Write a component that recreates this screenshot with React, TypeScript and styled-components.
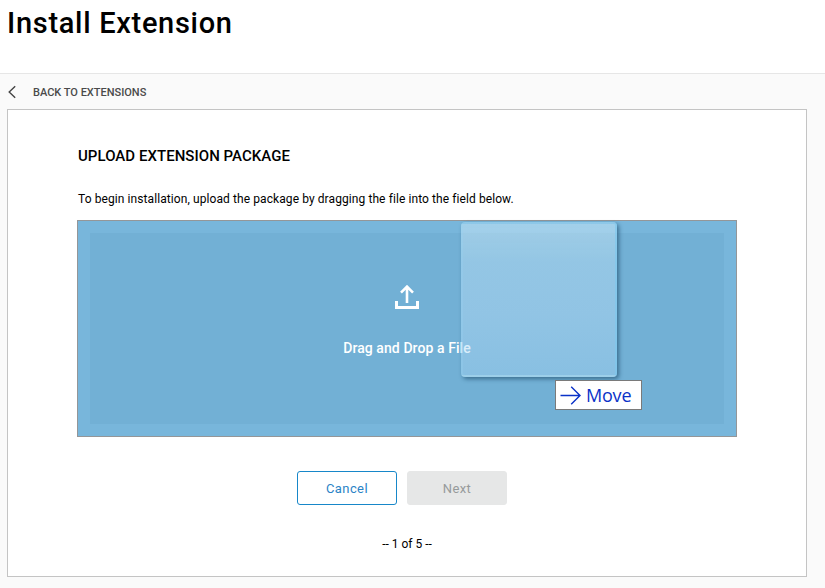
import React from "react";
import styled, { createGlobalStyle } from "styled-components";

const GlobalStyle = createGlobalStyle`
  * { box-sizing: border-box; }
  body {
    margin: 0;
    background: #fafafa;
    color: #000;
    font-family: Roboto, "Liberation Sans", sans-serif;
    overflow: hidden;
  }
`;

const Page = styled.div`
  height: 588px;
  display: flex;
  flex-direction: column;
`;

const Header = styled.header`
  height: 74px;
  flex: none;
  padding: 5px 7px 0;
  background: #fff;
  border-bottom: 1px solid #e6e6e6;
`;

const Title = styled.h1`
  margin: 0;
  font-size: 29px;
  line-height: 36px;
  font-weight: 500;
  letter-spacing: 0.7px;
`;

const BackLink = styled.a`
  height: 35px;
  flex: none;
  display: flex;
  align-items: center;
  gap: 16px;
  padding: 1px 0 0 8px;
  color: #4a4a4a;
  font-size: 11px;
  font-weight: 500;
`;

const Card = styled.main`
  width: 800px;
  height: 468px;
  flex: none;
  margin-left: 7px;
  padding: 36px 69px 0;
  background: #fff;
  border: 1px solid #c4c4c4;
`;

const SectionTitle = styled.h2`
  margin: 0 0 0 1px;
  font-size: 15px;
  line-height: 20px;
  font-weight: 500;
  letter-spacing: 0.04px;
`;

const Hint = styled.p`
  margin: 24px 0 12px 1px;
  font-size: 12px;
  line-height: 18px;
  letter-spacing: 0.088px;
`;

const DropZone = styled.div`
  position: relative;
  height: 217px;
  padding: 12px;
  background: #78b6db;
  border: 1px solid #949698;
`;

const DropTarget = styled.div`
  height: 100%;
  display: flex;
  flex-direction: column;
  align-items: center;
  padding-top: 52px;
  background: #72b0d5;
  color: #fff;
  font-size: 14px;
  line-height: 20px;
  font-weight: 500;
  letter-spacing: 0.08px;

  svg { margin-bottom: 29px; }
`;

const DraggedFile = styled.div`
  position: absolute;
  left: 383px;
  top: 1px;
  width: 156px;
  height: 155px;
  border: 2px solid rgba(150, 212, 242, 0.25);
  border-right-color: rgba(125, 200, 238, 0.6);
  border-radius: 4px;
  background: linear-gradient(
    rgba(212, 238, 251, 0.47),
    rgba(190, 226, 247, 0.45) 25%,
    rgba(184, 222, 247, 0.45) 60%,
    rgba(165, 212, 242, 0.45)
  );
  box-shadow: 2px 2px 4px rgba(20, 65, 95, 0.6);
`;

const MoveTip = styled.div`
  position: absolute;
  left: 477px;
  top: 159px;
  width: 87px;
  height: 30px;
  display: flex;
  align-items: center;
  gap: 5px;
  padding: 0 0 0 4px;
  background: #fff;
  border: 1px solid #7a7a7a;
  color: #0a32c8;
  font: 18px/28px "Open Sans", sans-serif;
  letter-spacing: -0.2px;
`;

const Actions = styled.div`
  display: flex;
  justify-content: center;
  gap: 10px;
  margin: 34px 10px 30px 0;
`;

const Button = styled.button<{ $muted?: boolean }>`
  width: 100px;
  height: 34px;
  padding: 2px 0 0;
  border: 1px solid ${(p) => (p.$muted ? "#e6e7e7" : "#1787c9")};
  border-radius: 3px;
  background: ${(p) => (p.$muted ? "#e6e7e7" : "#fff")};
  color: ${(p) => (p.$muted ? "#969a9b" : "#2b83c6")};
  font: 400 13px/18px Roboto, sans-serif;
  letter-spacing: 0.4px;
`;

const Steps = styled.div`
  font-size: 12px;
  line-height: 18px;
  text-align: center;
`;

export default function App() {
  return (
    <Page>
      <GlobalStyle />
      <Header>
        <Title>Install Extension</Title>
      </Header>
      <BackLink>
        <svg width="9" height="14" viewBox="0 0 9 14" fill="none" stroke="#444" strokeWidth="1.4">
          <path d="M7.2 1.2 1.2 7l6 5.8" />
        </svg>
        BACK TO EXTENSIONS
      </BackLink>
      <Card>
        <SectionTitle>UPLOAD EXTENSION PACKAGE</SectionTitle>
        <Hint>To begin installation, upload the package by dragging the file into the field below.</Hint>
        <DropZone>
          <DropTarget>
            <svg width="24" height="24" viewBox="0 0 24 24" fill="none" stroke="#fff" strokeWidth="3">
              <path d="M12 18V2M6 7.6l6-6 6 6" strokeWidth="2.6" />
              <path d="M1.5 16v6.5h21V16" />
            </svg>
            Drag and Drop a File
          </DropTarget>
          <DraggedFile />
          <MoveTip>
            <svg width="21" height="20" viewBox="0 0 21 20" fill="none" stroke="#0a32c8" strokeWidth="1.4">
              <path d="M.5 10.5H20M11.2 1.8 20 10.5l-8.8 8.7" />
            </svg>
            Move
          </MoveTip>
        </DropZone>
        <Actions>
          <Button>Cancel</Button>
          <Button $muted>Next</Button>
        </Actions>
        <Steps>-- 1 of 5 --</Steps>
      </Card>
    </Page>
  );
}
